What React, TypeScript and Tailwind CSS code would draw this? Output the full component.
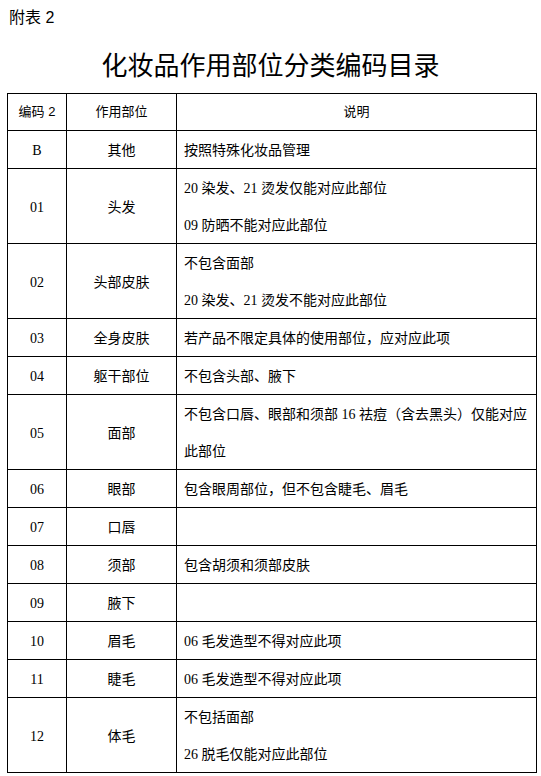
import React from 'react';

type Row = {
  code: string;
  part: string;
  notes: string[];
};

const ROWS: Row[] = [
  { code: 'B', part: '其他', notes: ['按照特殊化妆品管理'] },
  { code: '01', part: '头发', notes: ['20 染发、21 烫发仅能对应此部位', '09 防晒不能对应此部位'] },
  { code: '02', part: '头部皮肤', notes: ['不包含面部', '20 染发、21 烫发不能对应此部位'] },
  { code: '03', part: '全身皮肤', notes: ['若产品不限定具体的使用部位，应对应此项'] },
  { code: '04', part: '躯干部位', notes: ['不包含头部、腋下'] },
  { code: '05', part: '面部', notes: ['不包含口唇、眼部和须部 16 祛痘（含去黑头）仅能对应', '此部位'] },
  { code: '06', part: '眼部', notes: ['包含眼周部位，但不包含睫毛、眉毛'] },
  { code: '07', part: '口唇', notes: [''] },
  { code: '08', part: '须部', notes: ['包含胡须和须部皮肤'] },
  { code: '09', part: '腋下', notes: [''] },
  { code: '10', part: '眉毛', notes: ['06 毛发造型不得对应此项'] },
  { code: '11', part: '睫毛', notes: ['06 毛发造型不得对应此项'] },
  { code: '12', part: '体毛', notes: ['不包括面部', '26 脱毛仅能对应此部位'] },
];

const bodyFont = "font-['Liberation_Serif','Noto_Sans_CJK_SC',serif]";
const headFont = "font-['Liberation_Sans','Noto_Sans_CJK_SC',sans-serif]";

export default function App() {
  return (
    <div className="w-[541px] h-[776px] bg-white text-black overflow-hidden">
      <div className={`${headFont} pl-[9px] pt-[8px] text-[16px] leading-[20px]`}>附表 2</div>
      <h1 className={`${headFont} mt-[21px] text-center text-[26px] leading-[34px] font-normal`}>
        化妆品作用部位分类编码目录
      </h1>
      <table className="ml-[7px] mt-[10px] w-[529px] border-collapse table-fixed">
        <colgroup>
          <col className="w-[59px]" />
          <col className="w-[110px]" />
          <col className="w-[360px]" />
        </colgroup>
        <thead>
          <tr className={`${headFont} text-[13px] leading-[36px]`}>
            <th className="border border-black font-normal text-center p-0">编码 2</th>
            <th className="border border-black font-normal text-center p-0">作用部位</th>
            <th className="border border-black font-normal text-center p-0">说明</th>
          </tr>
        </thead>
        <tbody className={`${bodyFont} text-[14px] leading-[34px]`}>
          {ROWS.map((row) => (
            <tr key={row.code}>
              <td className="border border-black text-center align-middle p-0 pt-[3px]">{row.code}</td>
              <td className="border border-black text-center align-middle p-0 pt-[3px]">{row.part}</td>
              <td className="border border-black align-middle p-0 pl-[7px] whitespace-nowrap">
                {row.notes.map((line, i) => (
                  <div key={i} className="h-[37px] pt-[3px]">
                    {line}
                  </div>
                ))}
              </td>
            </tr>
          ))}
        </tbody>
      </table>
    </div>
  );
}
